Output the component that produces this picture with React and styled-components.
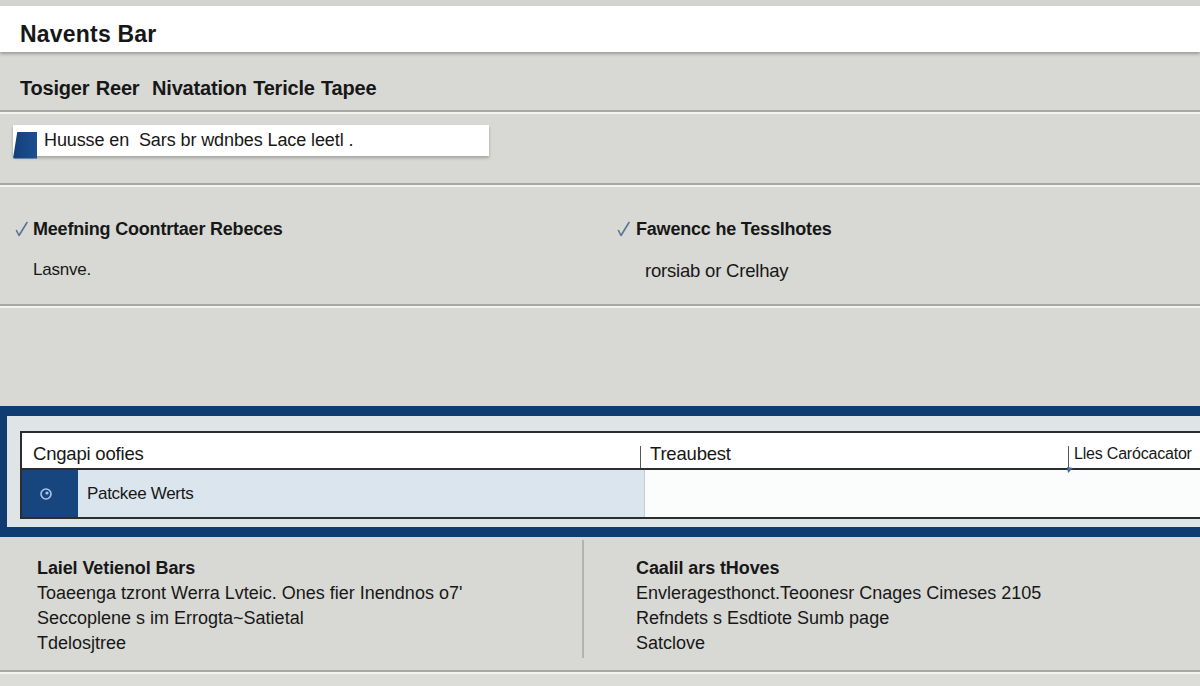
import React from "react";
import styled, { createGlobalStyle } from "styled-components";

const COLORS = {
  page: "#d8d9d5",
  text: "#171717",
  line: "#a7a8a4",
  highlight: "#f3f3f1",
  navy: "#0f3d72",
  navyCell: "#17467f",
  frameInner: "#dfe4e7",
  selected: "#dbe5ed",
  tableBorder: "#2a2d31",
};

const GlobalStyle = createGlobalStyle`
  body {
    margin: 0;
    background: ${COLORS.page};
    font-family: "Liberation Sans", Arial, sans-serif;
    color: ${COLORS.text};
    overflow: hidden;
  }
`;

const Page = styled.div`
  width: 1200px;
  height: 686px;
  overflow: hidden;
  display: flex;
  flex-direction: column;
`;

const TopStrip = styled.div`
  height: 6px;
  background: #d3d4d0;
`;

const TopBar = styled.header`
  height: 46px;
  box-sizing: border-box;
  background: #ffffff;
  display: flex;
  align-items: center;
  padding: 10px 0 0 20px;
  font-size: 23px;
  font-weight: 700;
  letter-spacing: 0.2px;
  box-shadow: 0 2px 3px rgba(0, 0, 0, 0.28);
  position: relative;
  z-index: 1;
`;

const Divider = styled.div`
  height: 2px;
  background: ${COLORS.line};
  border-bottom: 2px solid ${COLORS.highlight};
`;

const TitleRow = styled.div`
  height: 58px;
  display: flex;
  align-items: center;
  padding: 14px 0 0 20px;
  box-sizing: border-box;
  font-size: 20px;
  font-weight: 700;
  letter-spacing: -0.2px;
  word-spacing: 1px;
`;

const InputSection = styled.div`
  height: 69px;
  padding: 11px 0 0 13px;
  box-sizing: border-box;
`;

const InputBox = styled.div`
  width: 476px;
  height: 31px;
  display: flex;
  align-items: center;
  background: #ffffff;
  box-shadow: 0 2px 3px rgba(0, 0, 0, 0.25);
  font-size: 18px;
  letter-spacing: -0.1px;
`;

const InputTab = styled.div`
  width: 24px;
  height: 27px;
  margin-top: 9px;
  margin-right: 7px;
  background: linear-gradient(90deg, #123f7a, #1d4f91);
  clip-path: polygon(18% 0, 100% 0, 100% 100%, 0 100%);
  border-radius: 2px 0 0 2px;
`;

const Columns = styled.div`
  height: 117px;
  display: grid;
  grid-template-columns: 602px 1fr;
`;

const Column = styled.div`
  padding: 29px 0 0 15px;
`;

const CheckTitle = styled.div`
  display: flex;
  align-items: center;
  gap: ${({ $gap }) => $gap}px;
  font-size: 18px;
  font-weight: 700;
  letter-spacing: -0.2px;
  height: 26px;
`;

const SubText = styled.div`
  margin-top: 18px;
  padding-left: ${({ $indent }) => $indent}px;
  font-size: ${({ $size }) => $size}px;
  letter-spacing: -0.2px;
`;

const Spacer = styled.div`
  height: 98px;
`;

const Frame = styled.section`
  height: 131px;
  box-sizing: border-box;
  background: ${COLORS.frameInner};
  border-top: 10px solid ${COLORS.navy};
  border-bottom: 10px solid ${COLORS.navy};
  border-left: 7px solid ${COLORS.navy};
  padding: 15px 0 0 13px;
`;

const Table = styled.div`
  width: 1220px;
  height: 88px;
  box-sizing: border-box;
  border: 2px solid ${COLORS.tableBorder};
  border-right: none;
  background: #ffffff;
  display: grid;
  grid-template-rows: 37px 1fr;
`;

const HeaderRow = styled.div`
  display: grid;
  grid-template-columns: 618px 428px 1fr;
  border-bottom: 2px solid ${COLORS.tableBorder};
  font-size: 18.5px;
  letter-spacing: -0.2px;
`;

const HeaderCell = styled.div`
  display: flex;
  align-items: center;
  padding: 6px 0 0 ${({ $pad }) => $pad}px;
  position: relative;
  font-size: ${({ $size }) => ($size ? `${$size}px` : "inherit")};
  white-space: nowrap;
`;

const Tick = styled.span`
  position: absolute;
  left: 0;
  top: 13px;
  width: 1px;
  height: 22px;
  background: #55585c;
`;

const TickArrow = styled.svg`
  position: absolute;
  left: -2px;
  top: 33px;
`;

const BodyRow = styled.div`
  display: grid;
  grid-template-columns: 56px 567px 1fr;
`;

const IconCell = styled.div`
  background: ${COLORS.navyCell};
  display: flex;
  align-items: center;
  padding-left: 17px;
`;

const NameCell = styled.div`
  background: ${COLORS.selected};
  display: flex;
  align-items: center;
  padding-left: 9px;
  font-size: 17px;
  letter-spacing: -0.3px;
  border-right: 1px solid #c4ccd3;
`;

const EmptyCell = styled.div`
  background: #fbfcfc;
`;

const Bottom = styled.div`
  height: 133px;
  display: grid;
  grid-template-columns: 584px 1fr;
`;

const InfoBlock = styled.div`
  padding: ${({ $left }) => `16px 0 0 ${$left}px`};
  border-right: ${({ $rule }) => ($rule ? `2px solid #b3b4b0` : "none")};
  margin: 3px 0 12px;
  font-size: 18px;
  line-height: 25px;
`;

const InfoTitle = styled.div`
  font-weight: 700;
  font-size: 18px;
  letter-spacing: -0.1px;
`;

const Footer = styled.div`
  flex: 1;
  background: #dcddd9;
`;

const Check = () => (
  <svg width="13" height="16" viewBox="0 0 13 16">
    <path
      d="M1.5 9.5 L4 14.5 L12 1.5"
      fill="none"
      stroke="#5a7394"
      strokeWidth="1.6"
      strokeLinecap="round"
      strokeLinejoin="round"
    />
  </svg>
);

const RadioIcon = () => (
  <svg width="14" height="14" viewBox="0 0 14 14">
    <circle cx="7" cy="7" r="5" fill="none" stroke="#a9c6ea" strokeWidth="1.6" />
    <circle cx="8" cy="6" r="1.6" fill="#a9c6ea" />
  </svg>
);

export default function App() {
  return (
    <Page>
      <GlobalStyle />
      <TopStrip />
      <TopBar>Navents Bar</TopBar>

      <TitleRow>Tosiger Reer&nbsp; Nivatation Tericle Tapee</TitleRow>
      <Divider />

      <InputSection>
        <InputBox>
          <InputTab />
          Huusse en&nbsp; Sars br wdnbes Lace leetl .
        </InputBox>
      </InputSection>
      <Divider />

      <Columns>
        <Column>
          <CheckTitle $gap={5}>
            <Check />
            Meefning Coontrtaer Rebeces
          </CheckTitle>
          <SubText $indent={18} $size={17}>Lasnve.</SubText>
        </Column>
        <Column>
          <CheckTitle $gap={6}>
            <Check />
            Fawencc he Tesslhotes
          </CheckTitle>
          <SubText $indent={28} $size={18.5}>rorsiab or Crelhay</SubText>
        </Column>
      </Columns>
      <Divider />

      <Spacer />

      <Frame>
        <Table>
          <HeaderRow>
            <HeaderCell $pad={11}>Cngapi oofies</HeaderCell>
            <HeaderCell $pad={10}>
              <Tick />
              Treaubest
            </HeaderCell>
            <HeaderCell $pad={6} $size={16}>
              <Tick />
              <TickArrow width="8" height="8" viewBox="0 0 8 8">
                <path d="M1 1 L7 2 L2 7 Z" fill="#3f6a9a" />
              </TickArrow>
              Lles Carócacator
            </HeaderCell>
          </HeaderRow>
          <BodyRow>
            <IconCell>
              <RadioIcon />
            </IconCell>
            <NameCell>Patckee Werts</NameCell>
            <EmptyCell />
          </BodyRow>
        </Table>
      </Frame>

      <Bottom>
        <InfoBlock $left={37} $rule>
          <InfoTitle>Laiel Vetienol Bars</InfoTitle>
          <div>Toaeenga tzront Werra Lvteic. Ones fier Inendnos o7'</div>
          <div>Seccoplene s im Errogta~Satietal</div>
          <div>Tdelosjtree</div>
        </InfoBlock>
        <InfoBlock $left={52}>
          <InfoTitle>Caalil ars tHoves</InfoTitle>
          <div>Envleragesthonct.Teoonesr Cnages Cimeses 2105</div>
          <div>Refndets s Esdtiote Sumb page</div>
          <div>Satclove</div>
        </InfoBlock>
      </Bottom>
      <Divider />
      <Footer />
    </Page>
  );
}
